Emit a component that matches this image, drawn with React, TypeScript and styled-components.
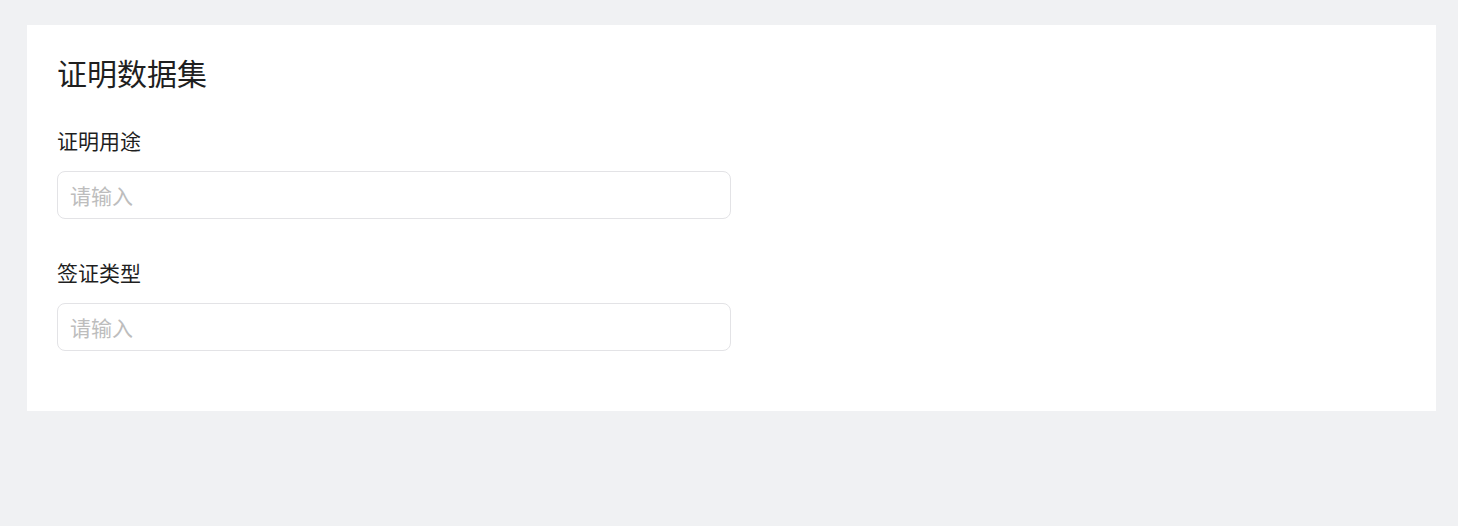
import styled, { createGlobalStyle } from "styled-components";

const GlobalStyle = createGlobalStyle`
  html, body {
    margin: 0;
    padding: 0;
    background: #f0f1f3;
    font-family: "Noto Sans CJK SC", "Noto Sans", sans-serif;
  }
`;

const Page = styled.div`
  padding: 25px 22px 0 27px;
`;

const Card = styled.section`
  background: #fff;
  padding: 26px 30px 60px;
`;

const Title = styled.h1`
  margin: 0 0 33px;
  font-size: 30px;
  font-weight: 400;
  line-height: 42px;
  color: #1f1f1f;
`;

const Field = styled.div`
  display: flex;
  flex-direction: column;
  gap: 17px;
  & + & {
    margin-top: 39px;
  }
`;

const Label = styled.label`
  font-size: 21px;
  line-height: 28px;
  color: #1f1f1f;
`;

const Input = styled.input`
  box-sizing: border-box;
  width: 674px;
  height: 48px;
  padding: 0 12px;
  border: 1px solid #e3e3e6;
  border-radius: 8px;
  font-family: inherit;
  font-size: 21px;
  color: #333;
  outline: none;
  &::placeholder {
    color: #bdbdbd;
  }
`;

const fields = ["证明用途", "签证类型"];

const App = () => {
  return (
    <Page>
      <GlobalStyle />
      <Card>
        <Title>证明数据集</Title>
        {fields.map((label) => (
          <Field key={label}>
            <Label>{label}</Label>
            <Input placeholder="请输入" />
          </Field>
        ))}
      </Card>
    </Page>
  );
};

export default App;
